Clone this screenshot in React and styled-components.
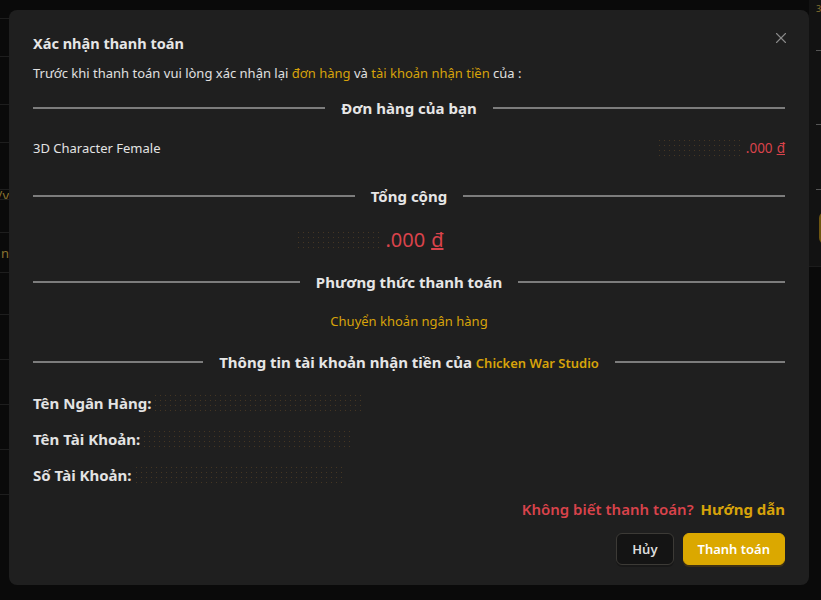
import React from "react";
import styled, { createGlobalStyle } from "styled-components";
import { X } from "lucide-react";

const GlobalStyle = createGlobalStyle`
  html, body {
    margin: 0;
    padding: 0;
    background: #0a0a0a;
    font-family: "Noto Sans", "Open Sans", Arial, sans-serif;
  }
  * { box-sizing: border-box; }
`;

const Screen = styled.div`
  position: relative;
  width: 821px;
  height: 600px;
  overflow: hidden;
  background: #0a0a0a;
`;

const Backdrop = styled.div`
  display: flex;
  justify-content: space-between;
  height: 100%;
`;

const SideList = styled.div`
  width: 9px;
  display: flex;
  flex-direction: column;
`;

const SideRow = styled.div`
  height: ${({ $h }) => $h}px;
  border-bottom: 1px solid #1e1e1e;
  color: #8a7330;
  font-size: 13px;
  line-height: ${({ $h }) => $h}px;
  overflow: hidden;
  white-space: nowrap;
  direction: rtl;
`;

const RightPanel = styled.div`
  width: 12px;
  height: 267px;
  background: #121212;
  border-bottom: 1px solid #1c1c1c;
  display: flex;
  flex-direction: column;
  padding-left: 7px;
`;

const Corner = styled.div`
  font-size: 9px;
  line-height: 10px;
  margin-top: 4px;
  color: #8a7330;
  overflow: hidden;
`;

const Tick = styled.div`
  margin-top: ${({ $mt }) => $mt}px;
  width: 5px;
  height: 1px;
  background: #555;
`;

const GoldStub = styled.div`
  margin-top: 22px;
  margin-left: 3px;
  width: 12px;
  height: 32px;
  border-radius: 6px;
  background: #6e5510;
`;

const Overlay = styled.div`
  position: absolute;
  inset: 0;
  padding: 10px 0 0 9px;
`;

const Modal = styled.div`
  position: relative;
  width: 800px;
  height: 575px;
  background: #1f1f1f;
  border-radius: 8px;
  padding: 22px 24px 20px 24px;
  display: flex;
  flex-direction: column;
  color: #e3e3e3;
`;

const CloseBtn = styled.button`
  position: absolute;
  top: 19px;
  right: 19px;
  background: none;
  border: none;
  padding: 0;
  color: #8a8a8a;
  display: flex;
  cursor: pointer;
`;

const Title = styled.div`
  font-size: 14.5px;
  font-weight: 700;
  line-height: 22px;
  color: #e6e6e6;
`;

const Subtitle = styled.div`
  margin-top: 9px;
  font-size: 13px;
  line-height: 20px;
  color: #e0e0e0;
`;

const Gold = styled.span`
  color: #d7a30a;
  font-weight: ${({ $w }) => $w || 400};
  font-size: ${({ $size }) => ($size ? `${$size}px` : "inherit")};
`;

const Divider = styled.div`
  margin-top: ${({ $mt }) => $mt}px;
  display: flex;
  align-items: center;
  gap: 16px;
  height: 24px;
  font-size: 15px;
  font-weight: 700;
  color: #e6e6e6;
  white-space: nowrap;
  &::before,
  &::after {
    content: "";
    flex: 1;
    height: 2px;
    background: #7c7c7c;
  }
`;

const ItemRow = styled.div`
  margin-top: 19px;
  display: flex;
  align-items: center;
  justify-content: space-between;
  font-size: 13px;
  line-height: 20px;
`;

const Price = styled.div`
  display: flex;
  align-items: center;
  color: #d9434b;
  font-size: ${({ $size }) => $size}px;
  margin-right: ${({ $offset }) => $offset || 0}px;
`;

const Dong = styled.span`
  margin-left: 0.3em;
  text-decoration: underline;
`;

const Blur = styled.span`
  display: inline-block;
  width: ${({ $w }) => $w}px;
  height: 20px;
  margin-right: 3px;
  background-image: radial-gradient(circle, rgba(150, 105, 45, 0.32) 0.6px, transparent 0.9px);
  background-size: 5px 5px;
`;

const TotalRow = styled.div`
  margin-top: 19px;
  display: flex;
  justify-content: center;
  line-height: 28px;
`;

const Method = styled.div`
  margin-top: 18px;
  text-align: center;
  font-size: 13px;
  line-height: 20px;
  color: #d7a30a;
`;

const InfoList = styled.div`
  margin-top: 19px;
  display: flex;
  flex-direction: column;
  gap: 14px;
`;

const InfoRow = styled.div`
  display: flex;
  align-items: center;
  font-size: 15px;
  font-weight: 700;
  line-height: 22px;
  color: #e3e3e3;
  gap: 2px;
`;

const Help = styled.div`
  margin-top: 12px;
  text-align: right;
  font-size: 15px;
  line-height: 22px;
  font-weight: 600;
`;

const Red = styled.span`
  color: #d9434b;
  margin-right: 7px;
`;

const Actions = styled.div`
  margin-top: 13px;
  display: flex;
  justify-content: flex-end;
  gap: 9px;
`;

const Button = styled.button`
  height: 32px;
  padding: 0 ${({ $primary }) => ($primary ? 14 : 15)}px;
  border-radius: 6px;
  font-family: inherit;
  font-size: 13px;
  font-weight: 600;
  cursor: pointer;
  border: 1px solid ${({ $primary }) => ($primary ? "#dba800" : "#3c3a36")};
  background: ${({ $primary }) => ($primary ? "#dba800" : "#141414")};
  color: ${({ $primary }) => ($primary ? "#ffffff" : "#dcdcdc")};
  box-shadow: 0 2px 0 ${({ $primary }) => ($primary ? "rgba(120, 80, 0, 0.35)" : "rgba(0,0,0,0.2)")};
`;

const sideRows = [
  ["", 19],
  ["", 38],
  ["", 48],
  ["", 38],
  ["", 47],
  ["v/", 10],
  ["", 33],
  ["n", 40],
  ["", 42],
  ["", 45],
  ["", 45],
  ["", 45],
  ["", 45],
];

export default function App() {
  return (
    <Screen>
      <GlobalStyle />
      <Backdrop>
        <SideList>
          {sideRows.map(([t, h], i) => (
            <SideRow key={i} $h={h}>
              {t}
            </SideRow>
          ))}
        </SideList>
        <RightPanel>
          <Corner>3</Corner>
          <Tick $mt={36} />
          <Tick $mt={73} />
          <Tick $mt={64} />
          <GoldStub />
        </RightPanel>
      </Backdrop>
      <Overlay>
        <Modal>
          <CloseBtn>
            <X size={18} strokeWidth={1.5} />
          </CloseBtn>
          <Title>Xác nhận thanh toán</Title>
          <Subtitle>
            Trước khi thanh toán vui lòng xác nhận lại <Gold>đơn hàng</Gold> và{" "}
            <Gold>tài khoản nhận tiền</Gold> của :
          </Subtitle>
          <Divider $mt={14}>Đơn hàng của bạn</Divider>
          <ItemRow>
            <span>3D Character Female</span>
            <Price $size={13.5}>
              <Blur $w={86} />
              .000<Dong>đ</Dong>
            </Price>
          </ItemRow>
          <Divider $mt={27}>Tổng cộng</Divider>
          <TotalRow>
            <Price $size={20} $offset={78}>
              <Blur $w={86} />
              .000<Dong>đ</Dong>
            </Price>
          </TotalRow>
          <Divider $mt={17}>Phương thức thanh toán</Divider>
          <Method>Chuyển khoản ngân hàng</Method>
          <Divider $mt={20}>
            <span>
              Thông tin tài khoản nhận tiền của{" "}
              <Gold $w={600} $size={13}>
                Chicken War Studio
              </Gold>
            </span>
          </Divider>
          <InfoList>
            <InfoRow>
              Tên Ngân Hàng: <Blur $w={210} />
            </InfoRow>
            <InfoRow>
              Tên Tài Khoản: <Blur $w={210} />
            </InfoRow>
            <InfoRow>
              Số Tài Khoản: <Blur $w={210} />
            </InfoRow>
          </InfoList>
          <Help>
            <Red>Không biết thanh toán?</Red>
            <Gold $w={700}>Hướng dẫn</Gold>
          </Help>
          <Actions>
            <Button>Hủy</Button>
            <Button $primary>Thanh toán</Button>
          </Actions>
        </Modal>
      </Overlay>
    </Screen>
  );
}
